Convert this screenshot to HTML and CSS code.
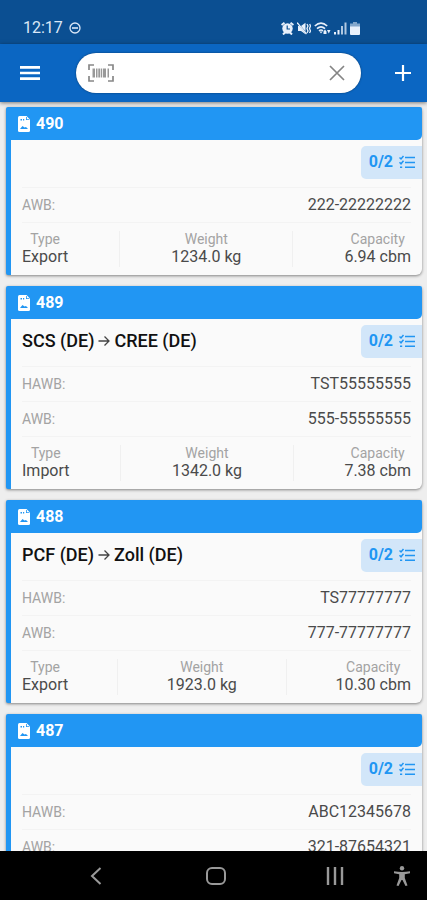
FILE: index.html
```html
<!DOCTYPE html>
<html lang="en">
<head>
<meta charset="utf-8">
<meta name="viewport" content="width=device-width, initial-scale=1">
<title>Shipments</title>
<link rel="stylesheet" href="styles.css">
</head>
<body>
<svg class="symbols" aria-hidden="true">
  <symbol id="file" viewBox="0 0 12 16">
    <path fill="#fff" d="M1.5 0H8.500L12 3.500V14.500Q12 16 10.500 16H1.500Q0 16 0 14.500V1.500Q0 0 1.500 0Z"/>
    <path fill="#2196f3" d="M8 1V4H11.200V3.300H8.800V1ZM2.500 3H4V4.500H2.500ZM5 3H6.200V4.500H5ZM2 13L4.500 10L6.500 11.500L8 11L10 13Z"/>
  </symbol>
  <symbol id="checklist" viewBox="0 0 16 14">
    <g fill="none" stroke="#2196f3" stroke-width="1.500">
      <path d="M6 2.500H16M6 7.500H16M6 12.200H16"/>
      <path d="M.5 2.500L2 4L4.500 1M.5 7.300L2 8.800L4.500 5.800M1 12.200H3.200"/>
    </g>
  </symbol>
  <symbol id="arrow" viewBox="0 0 12 12">
    <path fill="none" stroke="#444" stroke-width="1.300" d="M.5 6H11M6.500 1.500L11 6L6.500 10.500"/>
  </symbol>
</svg>

<div class="status">
  <div class="status-side">
    <span>12:17</span>
    <svg width="12" height="12" viewBox="0 0 12 12"><circle cx="6" cy="6" r="5" fill="none" stroke="#dbe7f7" stroke-width="1.300"/><path stroke="#dbe7f7" stroke-width="1.600" d="M3 6H9"/></svg>
  </div>
  <div class="status-side status-icons">
    <svg width="13" height="13" viewBox="0 0 13 13"><path stroke="#e8f0fb" stroke-width="2" d="M.5 3L3.500 .8M12.500 3L9.500 .8M2 12.500L4 10.500M11 12.500L9 10.500"/><circle cx="6.500" cy="6.500" r="5.200" fill="#e8f0fb"/><path fill="none" stroke="#0b4f92" stroke-width="1.200" d="M6.200 3.500V7H9"/></svg>
    <svg width="14" height="13" viewBox="0 0 14 13"><path fill="#e8f0fb" d="M1 4H4L8.500 .8V12.200L4 9H1Z"/><path stroke="#0b4f92" stroke-width="1.200" d="M1 1.500L9 11"/><path stroke="#e8f0fb" stroke-width="1.200" d="M0 .5L9.500 12"/><path fill="none" stroke="#e8f0fb" stroke-width="1.300" d="M10 2L11 4L10 6.500L11 9L10 11M12.700 2L13.500 4L12.500 6.500L13.500 9L12.500 11"/></svg>
    <svg width="17" height="13" viewBox="0 0 17 13"><g fill="none" stroke="#e8f0fb" stroke-width="1.600"><path d="M.8 4Q7 -1.800 13.200 4M3 6.600Q7 3 11 6.600M5 8.800Q7 7.200 9 8.800"/></g><path fill="#e8f0fb" d="M5.500 9.500H8.500L7 11.500ZM9.500 9.500L11 7.500L12.500 9.500V12H9.500ZM13 8H16.500L14.800 11.500Z"/></svg>
    <svg width="13" height="13" viewBox="0 0 13 13"><g fill="#e8f0fb"><path d="M0 10H2V12.500H0ZM3.500 8H5.500V12.500H3.500Z"/><path d="M7 4H9V12.500H7ZM10.500 .5H12.500V12.500H10.500Z" opacity=".75"/></g></svg>
    <svg width="10" height="13" viewBox="0 0 10 13"><path fill="#e8f0fb" opacity=".55" d="M3 0H7V1.500H10V5H0V1.500H3Z"/><path fill="#e8f0fb" d="M0 4.500H10V12Q10 13 9 13H1Q0 13 0 12Z"/></svg>
  </div>
</div>

<header class="appbar">
  <button class="icon-button" type="button" aria-label="Menu">
    <svg width="20" height="14" viewBox="0 0 20 14"><path stroke="#fff" stroke-width="2.600" d="M0 1.400H20M0 7H20M0 12.600H20"/></svg>
  </button>
  <form class="search">
    <svg width="26" height="18" viewBox="0 0 26 18"><path fill="none" stroke="#888" stroke-width="1.700" d="M1 6V1H6M20 1H25V6M25 12V17H20M6 17H1V12"/><path fill="#999" d="M4.500 4.500H7V13.500H4.500ZM8 4.500H9.500V13.500H8ZM10.300 4.500H12.300V13.500H10.300ZM13 4.500H14.200V13.500H13ZM15 4.500H18V13.500H15ZM19.500 4.500H21V13.500H19.500Z"/></svg>
    <input class="search-input" type="text" aria-label="Search">
    <button class="clear" type="reset" aria-label="Clear">
      <svg width="16" height="16" viewBox="0 0 16 16"><path stroke="#858585" stroke-width="1.700" d="M1 1L15 15M15 1L1 15"/></svg>
    </button>
  </form>
  <button class="icon-button" type="button" aria-label="Add">
    <svg width="16" height="16" viewBox="0 0 16 16"><path stroke="#fff" stroke-width="2.200" d="M8 0V16M0 8H16"/></svg>
  </button>
</header>

<main class="list">
  <article class="card">
    <h2 class="card-head"><svg width="12" height="16"><use href="#file"/></svg>490</h2>
    <div class="card-body">
      <div class="route">
        <span class="badge">0/2<svg width="16" height="14"><use href="#checklist"/></svg></span>
      </div>
      <dl class="row"><dt>AWB:</dt><dd>222-22222222</dd></dl>
      <dl class="stats">
        <div class="stat"><dt>Type</dt><dd>Export</dd></div>
        <div class="stat"><dt>Weight</dt><dd>1234.0 kg</dd></div>
        <div class="stat"><dt>Capacity</dt><dd>6.94 cbm</dd></div>
      </dl>
    </div>
  </article>

  <article class="card">
    <h2 class="card-head"><svg width="12" height="16"><use href="#file"/></svg>489</h2>
    <div class="card-body">
      <div class="route">
        <h3>SCS (DE)<svg width="12" height="12"><use href="#arrow"/></svg>CREE (DE)</h3>
        <span class="badge">0/2<svg width="16" height="14"><use href="#checklist"/></svg></span>
      </div>
      <dl class="row"><dt>HAWB:</dt><dd>TST55555555</dd></dl>
      <dl class="row"><dt>AWB:</dt><dd>555-55555555</dd></dl>
      <dl class="stats">
        <div class="stat"><dt>Type</dt><dd>Import</dd></div>
        <div class="stat"><dt>Weight</dt><dd>1342.0 kg</dd></div>
        <div class="stat"><dt>Capacity</dt><dd>7.38 cbm</dd></div>
      </dl>
    </div>
  </article>

  <article class="card">
    <h2 class="card-head"><svg width="12" height="16"><use href="#file"/></svg>488</h2>
    <div class="card-body">
      <div class="route">
        <h3>PCF (DE)<svg width="12" height="12"><use href="#arrow"/></svg>Zoll (DE)</h3>
        <span class="badge">0/2<svg width="16" height="14"><use href="#checklist"/></svg></span>
      </div>
      <dl class="row"><dt>HAWB:</dt><dd>TS77777777</dd></dl>
      <dl class="row"><dt>AWB:</dt><dd>777-77777777</dd></dl>
      <dl class="stats">
        <div class="stat"><dt>Type</dt><dd>Export</dd></div>
        <div class="stat"><dt>Weight</dt><dd>1923.0 kg</dd></div>
        <div class="stat"><dt>Capacity</dt><dd>10.30 cbm</dd></div>
      </dl>
    </div>
  </article>

  <article class="card">
    <h2 class="card-head"><svg width="12" height="16"><use href="#file"/></svg>487</h2>
    <div class="card-body">
      <div class="route">
        <span class="badge">0/2<svg width="16" height="14"><use href="#checklist"/></svg></span>
      </div>
      <dl class="row"><dt>HAWB:</dt><dd>ABC12345678</dd></dl>
      <dl class="row"><dt>AWB:</dt><dd>321-87654321</dd></dl>
    </div>
  </article>
</main>

<nav class="navbar">
  <span></span>
  <button class="nav-button" type="button" aria-label="Back"><svg width="12" height="18" viewBox="0 0 12 18"><path fill="none" stroke="#999" stroke-width="2" d="M10.500 1L2 9L10.500 17"/></svg></button>
  <button class="nav-button" type="button" aria-label="Home"><svg width="20" height="18" viewBox="0 0 20 18"><rect x="1" y="1" width="18" height="16" rx="5" fill="none" stroke="#999" stroke-width="2"/></svg></button>
  <button class="nav-button" type="button" aria-label="Recent apps"><svg width="18" height="18" viewBox="0 0 18 18"><path stroke="#999" stroke-width="2.400" d="M2 0V18M9 0V18M16 0V18"/></svg></button>
  <button class="nav-button" type="button" aria-label="Accessibility"><svg width="16" height="20" viewBox="0 0 16 20"><circle cx="8" cy="2.300" r="2.200" fill="#999"/><path fill="#999" d="M0 5.200Q8 6.800 16 5.200V7.200L10.800 8.200V12L13.500 19.500L11.500 20L8.500 14H7.500L4.500 20L2.500 19.500L5.200 12V8.200L0 7.200Z"/></svg></button>
</nav>
</body>
</html>
```
FILE: styles.css
```css
* {
  box-sizing: border-box;
}

body {
  margin: 0;
  height: 100vh;
  display: flex;
  flex-direction: column;
  overflow: hidden;
  background: #eeeeee;
  color: #4a4a4a;
  font: 16px/20px Roboto, sans-serif;
}

h2, h3, dl, dd {
  margin: 0;
}

svg {
  display: block;
  flex: none;
}

button {
  padding: 0;
  border: 0;
  background: none;
}

.symbols {
  display: none;
}

.status {
  flex: none;
  display: flex;
  justify-content: space-between;
  padding: 18px 67px 6px 23px;
  background: #0b4f92;
  color: #dbe7f7;
}

.status-side {
  display: flex;
  align-items: center;
  gap: 6px;
}

.status-icons {
  gap: 3px;
}

.appbar {
  flex: none;
  display: flex;
  align-items: center;
  height: 58px;
  background: #0b66c2;
  box-shadow: 0 1px 4px rgba(0, 0, 0, 0.5);
  z-index: 1;
}

.icon-button {
  display: grid;
  place-items: center;
  width: 48px;
  height: 48px;
  margin: 0 9px 0 6px;
}

.search {
  flex: 1;
  display: flex;
  align-items: center;
  height: 40px;
  margin-left: 13px;
  padding: 0 16px 0 12px;
  border-radius: 20px;
  background: #fff;
  box-shadow: 0 0 2px rgba(0, 0, 0, 0.5);
}

.search + .icon-button {
  margin: 0 0 0 18px;
}

.search-input {
  flex: 1;
  min-width: 0;
  border: 0;
  outline: 0;
  background: none;
  font: inherit;
}

.list {
  flex: 1;
  min-height: 0;
  overflow: hidden;
  display: flex;
  flex-direction: column;
  gap: 11px;
  padding: 5px 5px 0 6px;
}

.card {
  flex: none;
  border-left: 5px solid #2196f3;
  border-radius: 2px 4px 6px 2px;
  background: #fafafa;
  box-shadow: 0 1px 3px rgba(0, 0, 0, 0.45);
}

.card-head {
  display: flex;
  align-items: center;
  gap: 6px;
  height: 33px;
  padding-left: 7px;
  border-radius: 0 2px 5px 0;
  background: #2196f3;
  color: #fff;
  font-size: 16px;
  font-weight: 700;
}

.card-body {
  padding: 0 11px;
}

.route {
  display: flex;
  align-items: center;
  height: 47px;
  padding-bottom: 3px;
}

.route h3 {
  display: flex;
  align-items: center;
  gap: 4px;
  color: #111;
  font-size: 18px;
  font-weight: 500;
}

.badge {
  display: flex;
  align-items: center;
  gap: 6px;
  height: 33px;
  margin: 0 -11px 0 auto;
  padding: 0 7px 0 8px;
  border-radius: 5px 0 0 5px;
  background: #d2e6f9;
  color: #2196f3;
  font-weight: 700;
}

.row {
  display: flex;
  align-items: center;
  justify-content: space-between;
  height: 35px;
  border-top: 1px solid #f3f3f3;
}

dt {
  color: #a3a3a3;
  font-size: 14px;
}

.stats {
  display: flex;
  justify-content: space-between;
  height: 53px;
  padding-top: 8px;
  border-top: 1px solid #f3f3f3;
}

.stat {
  display: flex;
  flex-direction: column;
  align-items: center;
  line-height: 17px;
}

/* Thin rule centred in the free space between two figures */
.stats::before,
.stats::after {
  content: "";
  width: 1px;
  height: 36px;
  background: #f0f0f0;
}

.stats::before {
  order: 1;
}

.stat:nth-child(2) {
  order: 2;
}

.stats::after {
  order: 3;
}

.stat:nth-child(3) {
  order: 4;
}

.navbar {
  flex: none;
  display: grid;
  grid-template-columns: 36fr 120fr 119fr 119fr 33fr;
  height: 49px;
  background: #000;
  z-index: 1;
}

.nav-button {
  display: grid;
  place-items: center;
}

.nav-button:last-child {
  width: 16px;
}
```
